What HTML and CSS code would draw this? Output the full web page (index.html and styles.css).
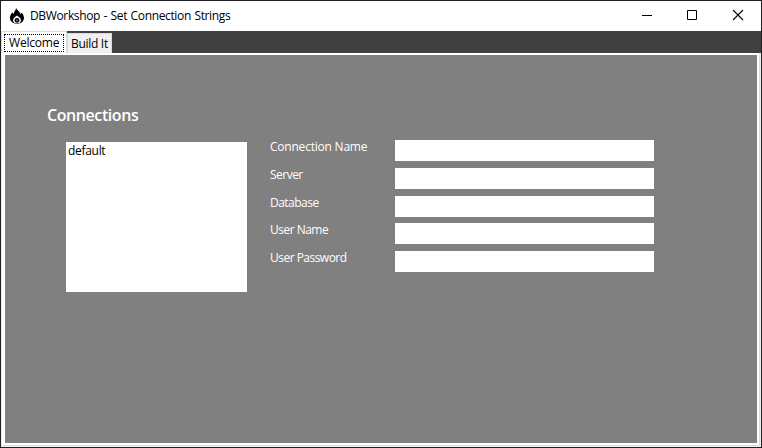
FILE: index.html
```
<!DOCTYPE html>
<html lang="en">
<head>
<meta charset="utf-8">
<title>DBWorkshop - Set Connection Strings</title>
<link rel="stylesheet" href="styles.css">
</head>
<body>
<div class="window">
  <header class="titlebar">
    <svg class="logo" width="16" height="16" viewBox="0 0 16 16"><path d="M7.2 0C7.6 2 11 3.4 11.4 6.2L12.6 4.8C14 6.2 15 8 15 9.8C15 13.6 12 15.8 8 15.8S1 13.4 1 9.8C1 7.8 2 6 3.2 4.6L4.6 6C4.8 3.6 6.8 2.400 7.200 0Z" fill="#000"/><path d="M8 7.500C9.500 8.800 12 10 12 12.200C12 14.200 10.200 15.300 8 15.300S4 14.200 4 12.200C4 10 6.500 8.800 8 7.500Z" fill="#fff"/><circle cx="8" cy="12.300" r="2.400" fill="#000"/><circle cx="8" cy="12.300" r=".9" fill="#999"/></svg>
    <h1 class="title">DBWorkshop - Set Connection Strings</h1>
    <div class="controls">
      <svg width="46" height="30" viewBox="0 0 46 30"><path d="M18 14.500h10" stroke="#000"/></svg>
      <svg width="46" height="30" viewBox="0 0 46 30"><path d="M17.500 9.500h9v9h-9z" fill="none" stroke="#000"/></svg>
      <svg width="46" height="30" viewBox="0 0 46 30"><path d="M17 9l10 10M27 9l-10 10" stroke="#000" stroke-width="1.100"/></svg>
    </div>
  </header>
  <nav class="tabs">
    <div class="tab active"><span class="focus">Welcome</span></div>
    <div class="tab">Build It</div>
  </nav>
  <main class="page">
    <h2 class="heading">Connections</h2>
    <div class="body">
      <div class="list">default</div>
      <form class="form">
        <label class="row"><span class="label wide">Connection Name</span><input class="field"></label>
        <label class="row"><span class="label">Server</span><input class="field"></label>
        <label class="row short"><span class="label">Database</span><input class="field"></label>
        <label class="row"><span class="label">User Name</span><input class="field"></label>
        <label class="row"><span class="label">User Password</span><input class="field"></label>
      </form>
    </div>
  </main>
</div>
</body>
</html>
```
FILE: styles.css
```
* { box-sizing: border-box; }
body {
  margin: 0;
  font: 12px/16px "Open Sans", "Noto Sans", sans-serif;
  color: #000;
}
.window {
  width: 762px;
  height: 448px;
  border: 1px solid #202022;
  background: #f0f0f0;
  display: flex;
  flex-direction: column;
  overflow: hidden;
}
.titlebar {
  height: 30px;
  flex: none;
  background: #fff;
  display: flex;
  padding-left: 8px;
}
.logo { margin-top: 7px; }
.title {
  margin: 7px 0 0 5px;
  font-size: 12px;
  font-weight: 400;
  white-space: nowrap;
  letter-spacing: -0.35px;
  word-spacing: 0.7px;
}
.controls { display: flex; margin-left: auto; margin-right: -1px; }
.tabs {
  height: 22px;
  flex: none;
  background: #404040;
  display: flex;
  align-items: flex-end;
}
.tab {
  width: 45px;
  height: 20px;
  background: #f0f0f0;
  border: 1px solid #d9d9d9;
  border-bottom: 0;
  padding: 2px 0 0 3px;
  white-space: nowrap;
  letter-spacing: -0.3px;
}
.tab.active {
  width: 66px;
  height: 22px;
  background: #fff;
  padding: 2px 0 0 2px;
  letter-spacing: -0.2px;
}
.focus {
  display: block;
  width: 60px;
  height: 18px;
  border: 1px dotted #000;
  padding-left: 4px;
  line-height: 15px;
}
.page {
  flex: none;
  width: 757px;
  height: 392px;
  background: #808080;
  border: solid #fff;
  border-width: 2px 2px 2px 3px;
  margin-left: 1px;
  box-shadow: 1px 1px 0 #dcdcdc, inset 0 0 0 0 #fff;
  padding: 49px 0 0 42px;
}
.heading {
  margin: 0;
  height: 36px;
  font: 600 16px/22px "Open Sans", "Noto Sans", sans-serif;
  color: #fff;
  letter-spacing: -0.42px;
}
.body { display: flex; padding-left: 19px; }
.list {
  width: 181px;
  height: 150px;
  margin-top: 2px;
  padding: 1px 0 0 2px;
  background: #fff;
  letter-spacing: -0.3px;
}
.form { margin-left: 23px; }
.row { display: flex; height: 28px; }
.row.short { height: 27px; }
.label {
  width: 125px;
  color: #fff;
  line-height: 14px;
  letter-spacing: -0.52px;
  white-space: nowrap;
}
.label.wide { letter-spacing: -0.22px; }
.field {
  width: 259px;
  height: 21px;
  padding: 0 3px;
  border: 0;
  background: #fff;
  font: inherit;
}
```
